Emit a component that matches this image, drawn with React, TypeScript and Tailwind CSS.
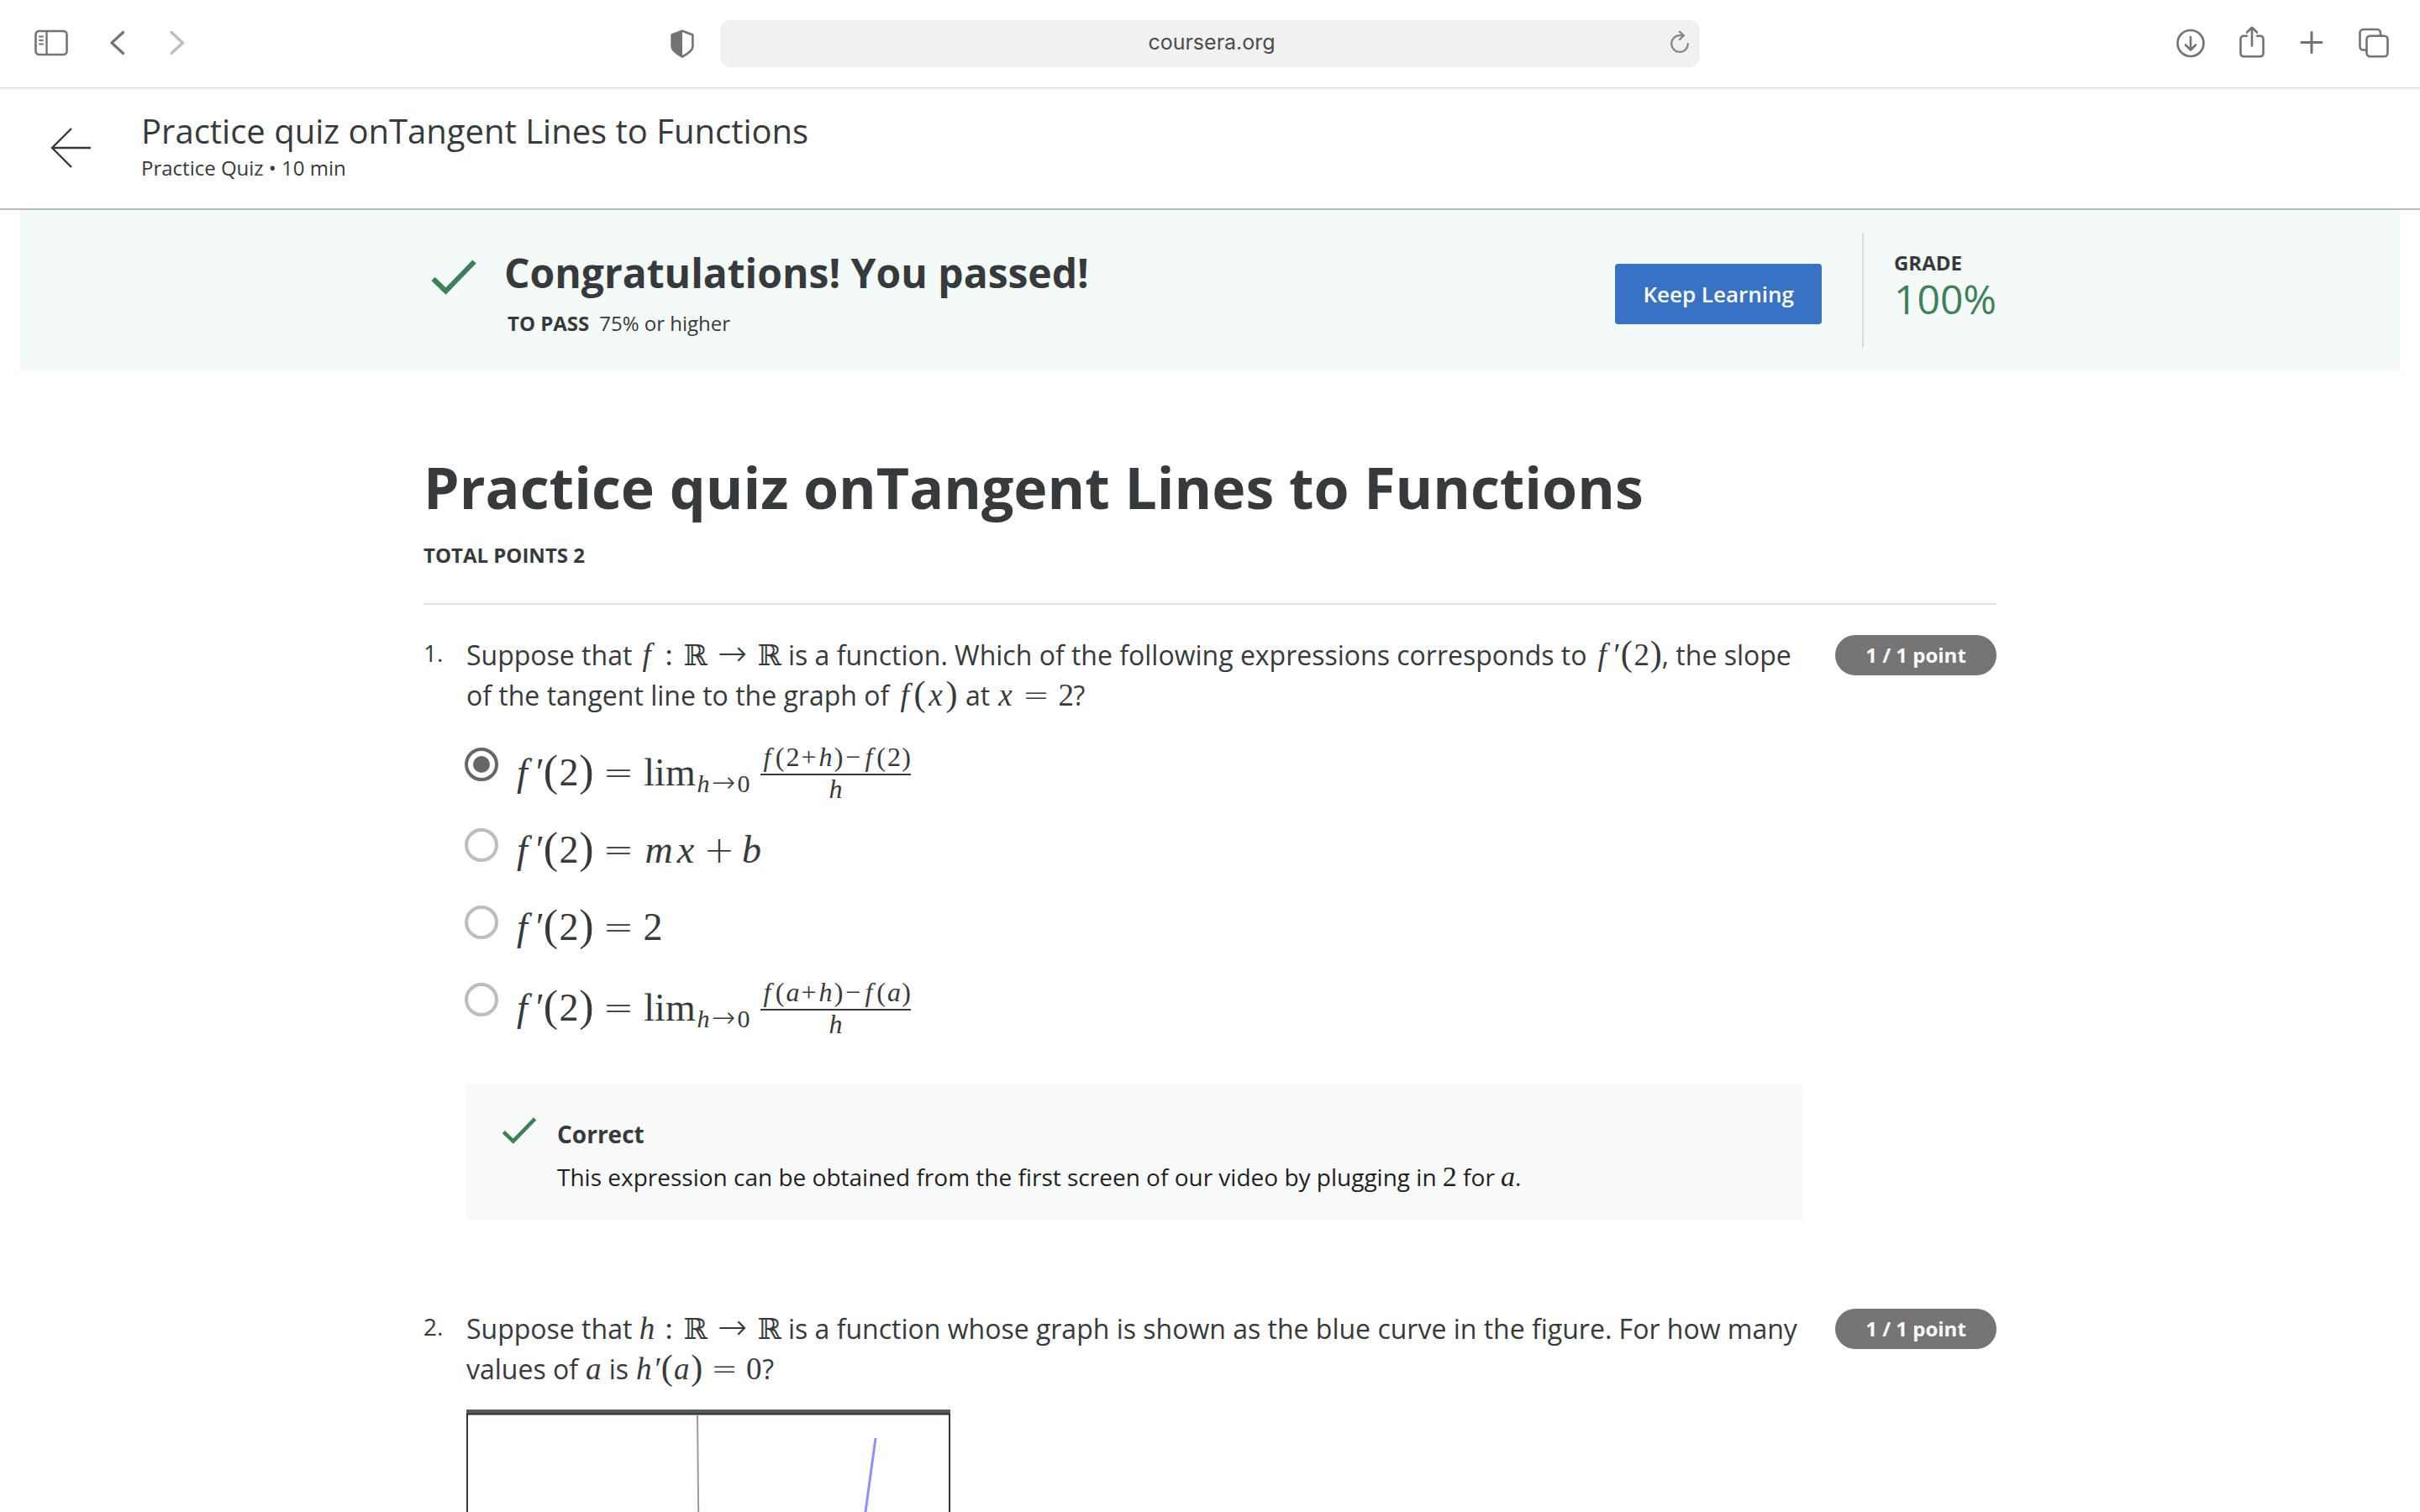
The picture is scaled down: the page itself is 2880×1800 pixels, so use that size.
import type { ReactNode } from "react";

/* ---------- math typesetting ---------- */

type CellProps = { w: string; children: ReactNode; i?: boolean; size?: string };

function Cell({ w, children, i, size = "" }: CellProps) {
  return (
    <span
      className={`inline-block text-center leading-8 whitespace-nowrap ${w} ${size} ${i ? "italic" : ""}`}
    >
      {children}
    </span>
  );
}

function MathText({ children }: { children: ReactNode }) {
  return (
    <span className="font-['Liberation_Serif',serif] text-[37px] whitespace-nowrap">{children}</span>
  );
}

function RealsToReals() {
  return (
    <>
      <Cell w="w-[35px]">:</Cell>
      <Cell w="w-[28px]" size="font-['DejaVu_Serif',serif] text-[34px]">ℝ</Cell>
      <Cell w="w-[60px]" size="font-['DejaVu_Sans',sans-serif] text-[42px] font-extralight">→</Cell>
      <Cell w="w-[28px]" size="font-['DejaVu_Serif',serif] text-[34px]">ℝ</Cell>
    </>
  );
}

function FPrime() {
  return (
    <>
      <Cell w="w-[25px]" i>f</Cell>
      <Cell w="w-[12px]" i>′</Cell>
      <Cell w="w-[19px]" size="text-[52px]">(</Cell>
      <Cell w="w-[24px]">2</Cell>
      <Cell w="w-[18px]" size="text-[52px]">)</Cell>
      <Cell w="w-[58px]" size="font-['DejaVu_Sans',sans-serif] text-[44px] font-extralight">=</Cell>
    </>
  );
}

function LimitFormula({ point }: { point: "2" | "a" }) {
  const italic = point === "a";
  return (
    <span className="flex h-[76px] items-start font-['Liberation_Serif',serif] text-[46px] leading-[48px]">
      <span className="pt-1.5 whitespace-nowrap">
        <FPrime />
        <Cell w="w-[64px]">lim</Cell>
        <sub className="text-[30px]">
          <Cell w="w-[16px]" i>h</Cell>
          <Cell w="w-[32px]" size="font-['DejaVu_Sans',sans-serif] text-[34px] font-extralight">→</Cell>
          <Cell w="w-[16px]">0</Cell>
        </sub>
      </span>
      <span className="ml-3 flex flex-col items-center text-[32px]">
        <span className="flex border-b-2 border-[#373a3c] pb-[9px] leading-[22px]">
          <span className="w-[16px] text-center italic">f</span>
          <span className="w-[14px] text-center">(</span>
          <span className={italic ? "w-[17px] text-center italic" : "w-[17px] text-center"}>{point}</span>
          <span className="w-[21px] text-center">+</span>
          <span className="w-[19px] text-center italic">h</span>
          <span className="w-[12px] text-center">)</span>
          <span className="w-[22px] text-center">−</span>
          <span className="w-[16px] text-center italic">f</span>
          <span className="w-[13px] text-center">(</span>
          <span className={italic ? "w-[18px] text-center italic" : "w-[18px] text-center"}>{point}</span>
          <span className="w-[11px] text-center">)</span>
        </span>
        <span className="pt-0.5 leading-[28px] italic">h</span>
      </span>
    </span>
  );
}

function PlainFormula({ children }: { children: ReactNode }) {
  return (
    <span className="block pt-0.5 font-['Liberation_Serif',serif] text-[46px] leading-[48px] whitespace-nowrap">
      <FPrime />
      {children}
    </span>
  );
}

/* ---------- icons ---------- */

function CheckIcon({ className }: { className: string }) {
  return (
    <svg viewBox="0 0 54 42" className={className} fill="none" stroke="#3d8059" strokeWidth="6" aria-hidden="true">
      <path d="M2.500 23 17.500 37.500 51.500 2.500" />
    </svg>
  );
}

function SidebarIcon() {
  return (
    <svg width="40" height="32" viewBox="0 0 40 32" fill="none" stroke="#737373" aria-hidden="true">
      <rect x="1.500" y="2" width="37" height="28" rx="4" strokeWidth="2.600" />
      <path d="M14.500 2v28" strokeWidth="2.400" />
      <path d="M6 8.500h4M6 13h4M6 17.500h4" strokeWidth="2" strokeLinecap="round" />
    </svg>
  );
}

function ChevronIcon({ flip }: { flip?: boolean }) {
  return (
    <svg width="18" height="30" viewBox="0 0 18 30" fill="none" stroke={flip ? "#bdbdbd" : "#737373"} strokeWidth="3.200" strokeLinecap="round" strokeLinejoin="round" aria-hidden="true">
      <path d={flip ? "M2 2.500 15.500 15 2 27.500" : "M15.500 2.500 2 15l13.500 12.500"} />
    </svg>
  );
}

function ShieldIcon() {
  return (
    <svg width="28" height="34" viewBox="0 0 28 34" aria-hidden="true">
      <path d="M14 1.800 26.400 6.500v14c0 4.500-6 8.500-12.400 12C7.600 29 1.600 25 1.600 20.500v-14z" fill="none" stroke="#737373" strokeWidth="2.600" strokeLinejoin="round" />
      <path d="M14 1.800v30.700C7.600 29 1.600 25 1.600 20.500v-14z" fill="#737373" />
    </svg>
  );
}

function ReloadIcon() {
  return (
    <svg width="24" height="28" viewBox="0 0 24 28" fill="none" stroke="#868686" strokeWidth="2.200" strokeLinecap="round" strokeLinejoin="round" aria-hidden="true">
      <path d="M21.800 16a9.800 9.800 0 1 1-9.800-9.800h4.500" />
      <path d="M11.800 1.600 16.800 6.200 11.800 11.200" />
    </svg>
  );
}

function DownloadIcon() {
  return (
    <svg width="34" height="38" viewBox="0 0 34 38" fill="none" stroke="#737373" strokeWidth="2.600" strokeLinecap="round" strokeLinejoin="round" aria-hidden="true">
      <circle cx="17" cy="20.500" r="15.500" />
      <path d="M17 13v15M11 22.500l6 6 6-6" />
    </svg>
  );
}

function ShareIcon() {
  return (
    <svg width="30" height="38" viewBox="0 0 30 38" fill="none" stroke="#737373" strokeWidth="2.600" strokeLinecap="round" strokeLinejoin="round" aria-hidden="true">
      <path d="M9 11.800H5A3.500 3.500 0 0 0 1.500 15.300v17.500A3.500 3.500 0 0 0 5 36.300h20a3.500 3.500 0 0 0 3.500-3.500V15.300a3.500 3.500 0 0 0-3.500-3.500h-4" />
      <path d="M15 23.500V2M9 7.500 15 1.800l6 5.700" />
    </svg>
  );
}

function PlusIcon() {
  return (
    <svg width="28" height="38" viewBox="0 0 28 38" fill="none" stroke="#737373" strokeWidth="3" strokeLinecap="round" aria-hidden="true">
      <path d="M14 7.500v24M2 19.500h24" />
    </svg>
  );
}

function TabsIcon() {
  return (
    <svg width="36" height="38" viewBox="0 0 36 38" fill="none" stroke="#737373" strokeWidth="2.600" strokeLinejoin="round" aria-hidden="true">
      <rect x="9.500" y="11.800" width="25" height="24.500" rx="4" />
      <path d="M9 28.500H5.500a4 4 0 0 1-4-4V8a4 4 0 0 1 4-4H22a4 4 0 0 1 4 4v3.500" />
    </svg>
  );
}

/* ---------- page parts ---------- */

function BrowserToolbar() {
  return (
    <header className="relative z-10 grid shrink-0 grid-cols-[1fr_minmax(0,1166px)_1fr] items-center border-b border-[#d8d8d8] bg-white py-6 shadow-[0_2px_3px_rgba(0,0,0,0.05)]">
      <div className="flex items-center pr-[31px] pl-[41px]">
        <button type="button" aria-label="Show sidebar" className="-mt-0.5"><SidebarIcon /></button>
        <button type="button" aria-label="Back" className="-mt-0.5 ml-[50px]"><ChevronIcon /></button>
        <button type="button" aria-label="Forward" className="-mt-0.5 ml-[53px]"><ChevronIcon flip /></button>
        <button type="button" aria-label="Privacy report" className="ml-auto"><ShieldIcon /></button>
      </div>
      <div className="flex h-14 items-center rounded-[12px] bg-[#f1f1f1] pr-3 pl-10">
        <input
          type="text"
          aria-label="Address"
          defaultValue="coursera.org"
          className="-mt-0.5 min-w-0 flex-1 bg-transparent text-center font-['Inter',sans-serif] text-[25px] text-[#4c4c4c] outline-none"
        />
        <button type="button" aria-label="Reload" className="-mt-1"><ReloadIcon /></button>
      </div>
      <div className="flex items-center justify-end pr-[37px]">
        <button type="button" aria-label="Downloads" className="-mt-1"><DownloadIcon /></button>
        <button type="button" aria-label="Share" className="-mt-1 ml-[41px]"><ShareIcon /></button>
        <button type="button" aria-label="New tab" className="-mt-1 ml-[42px]"><PlusIcon /></button>
        <button type="button" aria-label="Tab overview" className="-mt-1 ml-[42px]"><TabsIcon /></button>
      </div>
    </header>
  );
}

function QuizHeader() {
  return (
    <div className="flex shrink-0 items-center border-b-2 border-[#bbbbbb] pt-[25px] pb-[30px] pl-[60px]">
      <a href="#back" aria-label="Back to course" className="mt-1 block">
        <svg width="48" height="48" viewBox="0 0 48 48" fill="none" stroke="#373a3c" strokeWidth="2.400" aria-hidden="true">
          <path d="M25 1 2 24l23 23M2 24h46" />
        </svg>
      </a>
      <div className="ml-[60px]">
        <div className="text-[40px] leading-[52px]">Practice quiz onTangent Lines to Functions</div>
        <div className="text-2xl leading-9">Practice Quiz • 10 min</div>
      </div>
    </div>
  );
}

function ResultBanner() {
  return (
    <section className="mx-6 bg-[#f4faf8]">
      <div className="mx-auto flex max-w-[1872px] items-start pt-7 pb-7">
        <CheckIcon className="mt-[31px] ml-[9px] h-[42px] w-[54px]" />
        <div className="ml-[33px] pt-[15px]">
          <h2 className="text-5xl leading-[64px] font-bold">Congratulations! You passed!</h2>
          <p className="mt-2.5 ml-1 text-2xl leading-9">
            <strong className="mr-3 font-bold">TO PASS</strong>75% or higher
          </p>
        </div>
        <button
          type="button"
          className="mt-9 ml-auto h-[72px] rounded-[4px] bg-[#3872c5] px-[33px] text-[26px] font-semibold text-white"
        >
          Keep Learning
        </button>
        <div className="ml-12 h-[136px] border-l-2 border-[#dcdddd] pt-[17px] pl-9">
          <div className="text-2xl leading-9 font-bold">GRADE</div>
          <div className="text-5xl leading-[50px] text-[#3d8059]">100%</div>
        </div>
      </div>
    </section>
  );
}

type QuestionProps = { number: string; prompt: ReactNode; children: ReactNode };

function Question({ number, prompt, children }: QuestionProps) {
  return (
    <section className="flex items-start">
      <div className="w-[51px] shrink-0 text-[28px] leading-[42px]">{number}</div>
      <div className="min-w-0 flex-1">
        <div className="text-[32px] leading-[48px]">{prompt}</div>
        {children}
      </div>
      <div className="ml-[38px] flex h-12 w-48 shrink-0 items-center justify-center rounded-full bg-[#757575] text-2xl font-bold text-white">
        1 / 1 point
      </div>
    </section>
  );
}

function Option({ id, checked, children }: { id: string; checked?: boolean; children: ReactNode }) {
  return (
    <label htmlFor={id} className="flex items-start">
      <input
        id={id}
        type="radio"
        name="question-1"
        defaultChecked={checked}
        className="-ml-0.5 grid size-10 shrink-0 appearance-none place-items-center rounded-full border-4 border-[#bdbdbd] before:size-5 before:rounded-full checked:border-[#666666] checked:before:bg-[#666666]"
      />
      <span className="ml-4">{children}</span>
    </label>
  );
}

export default function App() {
  return (
    <div className="flex h-screen flex-col overflow-hidden bg-white font-['Open_Sans',sans-serif] text-[#373a3c]">
      <BrowserToolbar />
      <QuizHeader />
      <main className="min-h-0 flex-1 overflow-hidden">
        <ResultBanner />
        <div className="mx-auto mt-[90px] max-w-[1872px]">
          <h1 className="text-[68px] leading-[96px] font-bold">Practice quiz onTangent Lines to Functions</h1>
          <div className="mt-[15px] border-b-2 border-[#e1e1e1] pb-[39px] text-2xl leading-9 font-bold">TOTAL POINTS 2</div>

          <div className="flex flex-col gap-[106px] pt-9">
            <Question
              number="1."
              prompt={
                <>
                  Suppose that{" "}
                  <MathText>
                    <Cell w="w-[18px]" i>f</Cell>
                    <RealsToReals />
                  </MathText>{" "}
                  is a function. Which of the following expressions corresponds to{" "}
                  <MathText>
                    <Cell w="w-[20px]" i>f</Cell>
                    <Cell w="w-[11px]" i>′</Cell>
                    <Cell w="w-[16px]" size="text-[42px]">(</Cell>
                    <Cell w="w-[20px]">2</Cell>
                    <Cell w="w-[14px]" size="text-[42px]">)</Cell>
                  </MathText>
                  , the slope
                  <br />
                  of the tangent line to the graph of{" "}
                  <MathText>
                    <Cell w="w-[20px]" i>f</Cell>
                    <Cell w="w-[16px]" size="text-[42px]">(</Cell>
                    <Cell w="w-[22px]" i>x</Cell>
                    <Cell w="w-[16px]" size="text-[42px]">)</Cell>
                  </MathText>{" "}
                  at{" "}
                  <MathText>
                    <Cell w="w-[20px]" i>x</Cell>
                    <Cell w="w-[53px]" size="font-['DejaVu_Sans',sans-serif] text-[38px] font-extralight">=</Cell>
                    <Cell w="w-[18px]">2</Cell>
                  </MathText>
                  ?
                </>
              }
            >
              <div className="mt-[38px] flex flex-col gap-5">
                <Option id="q1-a" checked>
                  <LimitFormula point="2" />
                </Option>
                <div className="h-[72px]">
                  <Option id="q1-b">
                    <PlainFormula>
                      <Cell w="w-[38px]" i>m</Cell>
                      <Cell w="w-[26px]" i>x</Cell>
                      <Cell w="w-[54px]" size="font-['DejaVu_Sans',sans-serif] text-[44px] font-extralight">+</Cell>
                      <Cell w="w-[22px]" i>b</Cell>
                    </PlainFormula>
                  </Option>
                </div>
                <div className="h-[72px]">
                  <Option id="q1-c">
                    <PlainFormula>
                      <Cell w="w-[24px]">2</Cell>
                    </PlainFormula>
                  </Option>
                </div>
                <Option id="q1-d">
                  <LimitFormula point="a" />
                </Option>
              </div>

              <div className="mt-11 flex items-start bg-[#f8faf9] pt-10 pb-[27px] pl-[42px]">
                <CheckIcon className="h-8 w-[42px]" />
                <div className="ml-6">
                  <div className="text-[28px] leading-10 font-bold">Correct</div>
                  <p className="mt-[7px] text-[28px] leading-[48px] text-[#1f1f1f]">
                    This expression can be obtained from the first screen of our video by plugging in{" "}
                    <span className="font-['Liberation_Serif',serif] text-[34px] leading-8">2</span> for{" "}
                    <span className="font-['Liberation_Serif',serif] text-[34px] leading-8 italic">a</span>.
                  </p>
                </div>
              </div>
            </Question>

            <Question
              number="2."
              prompt={
                <>
                  Suppose that{" "}
                  <MathText>
                    <Cell w="w-[18px]" i>h</Cell>
                    <RealsToReals />
                  </MathText>{" "}
                  is a function whose graph is shown as the blue curve in the figure. For how many
                  <br />
                  values of{" "}
                  <MathText>
                    <Cell w="w-[20px]" i>a</Cell>
                  </MathText>{" "}
                  is{" "}
                  <MathText>
                    <Cell w="w-[20px]" i>h</Cell>
                    <Cell w="w-[10px]" i>′</Cell>
                    <Cell w="w-[15px]" size="text-[42px]">(</Cell>
                    <Cell w="w-[20px]" i>a</Cell>
                    <Cell w="w-[16px]" size="text-[42px]">)</Cell>
                    <Cell w="w-[50px]" size="font-['DejaVu_Sans',sans-serif] text-[38px] font-extralight">=</Cell>
                    <Cell w="w-[20px]">0</Cell>
                  </MathText>
                  ?
                </>
              }
            >
              <svg className="mt-6" width="576" height="400" viewBox="0 0 576 400" fill="none" role="img" aria-label="Graph of h">
                <path d="M1 0v400M575 0v400" stroke="#2f383d" strokeWidth="2" />
                <path d="M0 2.500h576" stroke="#55595c" strokeWidth="5" />
                <path d="M0 5.500h576" stroke="#2b363b" strokeWidth="2" />
                <path d="M275 6 279 400" stroke="#9a9a9a" strokeWidth="2" />
                <path d="M487 34 475 122 440 400" stroke="#8f90fb" strokeWidth="3" />
              </svg>
            </Question>
          </div>
        </div>
      </main>
    </div>
  );
}
